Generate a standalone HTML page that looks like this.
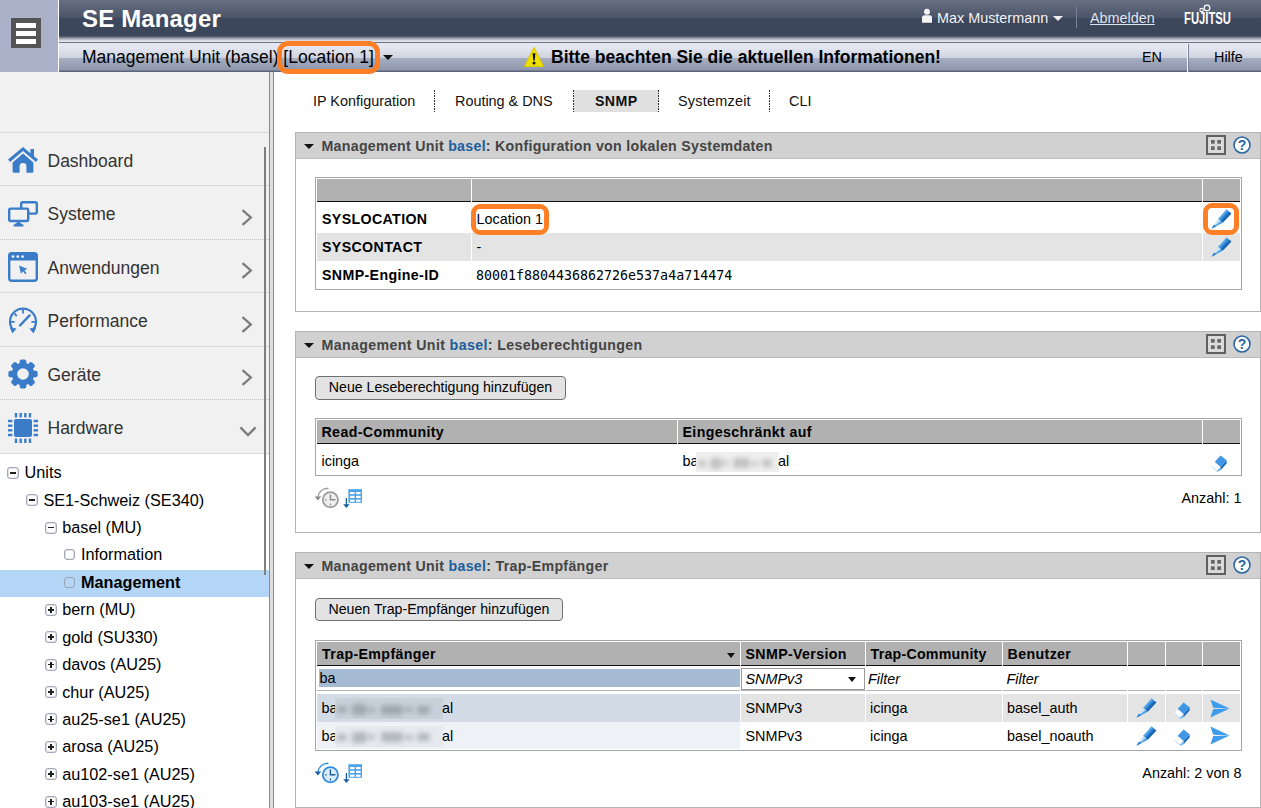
<!DOCTYPE html>
<html lang="de">
<head>
<meta charset="utf-8">
<title>SE Manager</title>
<style>
*{box-sizing:border-box;margin:0;padding:0}
html,body{width:1261px;height:808px;overflow:hidden;background:#fff}
body{font-family:"Liberation Sans",Arial,sans-serif;font-size:14px;color:#000;position:relative}
.a,svg{position:absolute}
#burger{left:0;top:0;width:58px;height:72px;background:#aab1c8}
#burger .ic{left:11px;top:18px;width:30px;height:30px;background:#555;position:absolute}
#burger .ic i{position:absolute;left:5px;width:20px;height:5px;background:#fff}
#top{left:59px;top:0;width:1202px;height:42px;background:linear-gradient(#676f83 0,#4a5367 18px,#3d475c 18.5px,#3d475c 36px,#8d93a1 38px,#e6e7ea 41px,#e6e7ea 42px)}
.usr{position:absolute;font-size:14.4px;line-height:17px;color:#f2f2f2;white-space:nowrap}
#top h1{position:absolute;left:23px;top:5px;font-size:24px;font-weight:bold;color:#fff;letter-spacing:.15px;line-height:28px}
#sub{left:59px;top:42px;width:1202px;height:30px;background:linear-gradient(#66728c 0,#66728c 1px,#e6e9f2 1.5px,#e2e5ef 6px,#cfd3df 16px,#a6aec1 16.5px,#8d96ac 28px,#5c657a 29px,#5c657a 30px)}
#sub .t{position:absolute;top:5px;font-size:17.5px;line-height:20px;white-space:nowrap}
#sub .s{position:absolute;top:7px;font-size:14.4px;line-height:17px;white-space:nowrap}
#side{left:0;top:72px;width:269px;height:736px;background:#f1f1f1}
#split{left:269px;top:72px;width:5px;height:736px;background:#dedede;border-left:1px solid #8a8a8a;border-right:1px solid #8a8a8a}
.tn{position:absolute;font-size:16.25px;line-height:20px;white-space:nowrap;color:#000}
.tb{position:absolute;width:12px;height:12px;border:1px solid #a4a8b6;border-radius:3px;background:#fff;box-shadow:inset 0 0 0 .6px #c8ccd6}
.tb:before{content:"";position:absolute;left:2px;top:4.2px;width:6px;height:1.6px;background:#222}
.tb.p:after{content:"";position:absolute;left:4.2px;top:2px;width:1.6px;height:6px;background:#222}
.tb.e:before{display:none}
.tb.e{width:11px;height:11px;margin:.5px 0 0 .5px}
.tb.s{background:transparent;border-color:#9aa6b8}
.dot{position:absolute;left:0;width:269px;height:0;border-top:1px dotted #c4c4c4}
svg.ico{left:8px}
svg.chev{left:241px}
.nl{position:absolute;left:47.5px;margin-top:1px;font-size:17.5px;line-height:20px;color:#333;white-space:nowrap}
.tab{position:absolute;top:90px;height:22px;padding-left:20px;font-size:14.4px;line-height:22px;white-space:nowrap;color:#111;background:repeating-linear-gradient(#2a2a2a 0,#2a2a2a 1.6px,transparent 1.6px,transparent 2.6px) right top/1.4px 100% no-repeat}
.tab.sel{background:repeating-linear-gradient(#2a2a2a 0,#2a2a2a 1.6px,transparent 1.6px,transparent 2.6px) right top/1.4px 100% no-repeat,#e0e0e0;font-weight:bold;font-size:14.2px;letter-spacing:.37px;padding-left:21px}
.panel{position:absolute;left:295px;width:966px;border:1px solid #b4b4b4;background:#fff}
.ph{position:absolute;left:296px;width:964px;height:26px;background:#d1d1d1;border-bottom:1px solid #bcbcbc}
.tt{position:absolute;left:321.5px;font-size:14.2px;letter-spacing:.28px;font-weight:bold;color:#444;line-height:17px;white-space:nowrap}
.tt b{color:#1b5e9b}
.arr{position:absolute;width:0;height:0;border:5px solid transparent;border-top:5px solid #111;border-bottom:0}
.tbl{position:absolute;left:315px;width:927px;border:1px solid #a6a6a6;background:#fff}
.th{position:absolute;background:#b1b1b1}
.hl{position:absolute;left:317px;width:923px;height:3px}
.c{position:absolute}
.bt{position:absolute;font-weight:bold;font-size:14.2px;letter-spacing:.37px;line-height:17px;white-space:nowrap;color:#000}
.rt{position:absolute;font-size:14.4px;line-height:17px;white-space:nowrap;color:#000}
.rt.it{font-style:italic}
.mono{font-family:"DejaVu Sans Mono","Liberation Mono",monospace;font-size:13.3px}
.btn{position:absolute;border:1px solid #707070;border-radius:4px;background:#e3e3e3;font-size:14.15px;line-height:21px;text-align:center;color:#000;white-space:nowrap}
.blurbox{position:absolute;overflow:hidden;box-shadow:0 0 2px 1px var(--b,transparent)}
.bl{position:absolute;left:0;top:0;right:0;bottom:0;filter:blur(2.5px)}
.bl i{position:absolute;background:currentColor;border-radius:3px}
.ob{position:absolute;border:5px solid #ff7f27;border-radius:9px}
</style>
</head>
<body>
<div id="burger" class="a"><div class="ic"><i style="top:4.5px"></i><i style="top:12.5px"></i><i style="top:20.5px"></i></div></div>
<div id="top" class="a"><h1>SE Manager</h1>
<svg style="left:862px;top:8px" width="12" height="16" viewBox="0 0 12 16"><circle cx="6" cy="3.8" r="3" fill="#f4f4f4"/><path d="M1 9.7a2.5 2.5 0 0 1 2.5-2.5h5a2.5 2.5 0 0 1 2.5 2.5V14.8H1z" fill="#f4f4f4"/></svg>
<div class="usr" style="left:878px;top:10px">Max Mustermann</div>
<div class="arr" style="left:994px;top:16px;border-top-color:#eee"></div>
<div class="a" style="left:1017px;top:7px;width:1px;height:21px;background:#79819a"></div>
<div class="usr" style="left:1031px;top:10px;text-decoration:underline;color:#dfe2ea">Abmelden</div>
<svg style="left:1122px;top:0" width="56" height="32" viewBox="0 0 56 32"><text x="3" y="24.4" font-family="Liberation Sans, sans-serif" font-weight="bold" font-size="16" fill="#fff" textLength="47" lengthAdjust="spacingAndGlyphs">FUJITSU</text><circle cx="20.6" cy="10" r="1.7" fill="none" stroke="#fff" stroke-width="1.1"/><circle cx="26" cy="8" r="2.8" fill="none" stroke="#fff" stroke-width="1.2"/></svg>
</div>
<div id="sub" class="a">
<div class="t" style="left:23px">Management Unit (basel) [Location 1]</div>
<div class="arr" style="left:324px;top:13px"></div>
<svg style="left:464px;top:4px" width="22" height="22" viewBox="0 0 22 22"><path d="M11 1.6 L20.4 20.4 H1.6 Z" fill="#efe000" stroke="#dccb00" stroke-width="1.2" stroke-linejoin="round"/><path d="M9.6 7.2h2.8l-.7 7.4h-1.4z" fill="#111"/><circle cx="11" cy="17.1" r="1.5" fill="#111"/></svg>
<div class="t" style="left:492px;font-weight:bold">Bitte beachten Sie die aktuellen Informationen!</div>
<div class="s" style="left:1083px">EN</div>
<div class="a" style="left:1128px;top:2px;width:1px;height:28px;background:#f4f5f9"></div>
<div class="a" style="left:1129px;top:2px;width:1px;height:28px;background:#7d859b"></div>
<div class="s" style="left:1155px">Hilfe</div>
</div>
<div class="a" style="left:58px;top:0;width:1px;height:72px;background:#fff"></div>
<div id="side" class="a"></div>
<div id="split" class="a"></div>
<div class="dot" style="top:132.2px"></div>
<svg class="ico" style="top:147px" width="30" height="26" viewBox="0 0 30 26"><path d="M15 0 L0 12.6 L2.1 15 L15 4.1 L27.9 15 L30 12.6 L26 9.2 V2 H22.4 V6.2 Z" fill="#3b7cc9"/><path d="M15 6.6 L4.6 15.4 V24.6 a1.2 1.2 0 0 0 1.2 1.2 H11.6 V19.4 a3.4 3.4 0 0 1 6.8 0 V25.8 H24.2 a1.2 1.2 0 0 0 1.2-1.2 V15.4 Z" fill="#3b7cc9"/></svg>
<div class="nl" style="top:149.7px">Dashboard</div>
<div class="dot" style="top:185.4px"></div>
<svg class="ico" style="top:201px" width="30" height="26" viewBox="0 0 30 26"><rect x="13.2" y="1.2" width="15.6" height="11.4" rx="1.5" fill="none" stroke="#3b7cc9" stroke-width="2.4"/><rect x="1.2" y="7.6" width="19" height="12.4" rx="1.5" fill="#f1f1f1" stroke="#3b7cc9" stroke-width="2.4"/><path d="M10.5 20.5 L15.5 24 V25.6 H5.5 V24 Z" fill="#3b7cc9"/></svg>
<div class="nl" style="top:202.9px">Systeme</div>
<svg class="chev" style="top:208.8px" width="12" height="17" viewBox="0 0 12 17"><path d="M1.5 1.2 L9.8 8.5 L1.5 15.8" fill="none" stroke="#7b7b7b" stroke-width="2.3"/></svg>
<div class="dot" style="top:239px"></div>
<svg class="ico" style="top:252px" width="30" height="30" viewBox="0 0 30 30"><rect x="1.2" y="1.2" width="27.6" height="27.6" rx="2.5" fill="none" stroke="#3b7cc9" stroke-width="2.4"/><path d="M1 3 a2 2 0 0 1 2-2 h24 a2 2 0 0 1 2 2 v5.6 H1z" fill="#3b7cc9"/><circle cx="5" cy="4.6" r="1.4" fill="#f1f1f1"/><circle cx="9.8" cy="4.6" r="1.4" fill="#f1f1f1"/><circle cx="14.6" cy="4.6" r="1.4" fill="#f1f1f1"/><path d="M11 13.5 L19.5 17 L16.3 18.2 L18.6 21.2 L17.2 22.2 L15 19.2 L13 21.8 Z" fill="#3b7cc9"/></svg>
<div class="nl" style="top:256.5px">Anwendungen</div>
<svg class="chev" style="top:262.4px" width="12" height="17" viewBox="0 0 12 17"><path d="M1.5 1.2 L9.8 8.5 L1.5 15.8" fill="none" stroke="#7b7b7b" stroke-width="2.3"/></svg>
<div class="dot" style="top:292.4px"></div>
<svg class="ico" style="top:307px" width="30" height="27" viewBox="0 0 30 27"><path d="M5.2 23.2 A13 13 0 1 1 24.8 23.2" fill="none" stroke="#3b7cc9" stroke-width="2.2"/><path d="M1.8 20.6 L8.6 21.6 L4.4 26.6 Z M28.2 20.6 L21.4 21.6 L25.6 26.6 Z" fill="#3b7cc9"/><path d="M12 18.5 L21.6 8.4" stroke="#3b7cc9" stroke-width="2.4" stroke-linecap="round"/><path d="M15 2.5 V6.4 M3 14.8 H6.6 M23.4 14.8 H27 M6.4 6.6 L8.8 9 " stroke="#3b7cc9" stroke-width="1.8"/></svg>
<div class="nl" style="top:309.9px">Performance</div>
<svg class="chev" style="top:315.8px" width="12" height="17" viewBox="0 0 12 17"><path d="M1.5 1.2 L9.8 8.5 L1.5 15.8" fill="none" stroke="#7b7b7b" stroke-width="2.3"/></svg>
<div class="dot" style="top:346px"></div>
<svg class="ico" style="top:359px" width="30" height="30" viewBox="-15 -15 30 30"><g fill="#3b7cc9"><circle r="11.2"/><rect x="-3.3" y="-14.6" width="6.6" height="7" rx="1.8" transform="rotate(0)"/><rect x="-3.3" y="-14.6" width="6.6" height="7" rx="1.8" transform="rotate(45)"/><rect x="-3.3" y="-14.6" width="6.6" height="7" rx="1.8" transform="rotate(90)"/><rect x="-3.3" y="-14.6" width="6.6" height="7" rx="1.8" transform="rotate(135)"/><rect x="-3.3" y="-14.6" width="6.6" height="7" rx="1.8" transform="rotate(180)"/><rect x="-3.3" y="-14.6" width="6.6" height="7" rx="1.8" transform="rotate(225)"/><rect x="-3.3" y="-14.6" width="6.6" height="7" rx="1.8" transform="rotate(270)"/><rect x="-3.3" y="-14.6" width="6.6" height="7" rx="1.8" transform="rotate(315)"/></g><circle r="5.8" fill="#f1f1f1"/></svg>
<div class="nl" style="top:363.5px">Geräte</div>
<svg class="chev" style="top:369.4px" width="12" height="17" viewBox="0 0 12 17"><path d="M1.5 1.2 L9.8 8.5 L1.5 15.8" fill="none" stroke="#7b7b7b" stroke-width="2.3"/></svg>
<div class="dot" style="top:399.3px"></div>
<svg class="ico" style="top:412.9px" width="30" height="30" viewBox="0 0 30 30"><rect x="6" y="6" width="18" height="18" rx="2" fill="#3b7cc9"/><g fill="#3b7cc9"><rect x="6.8" y="0" width="2.4" height="4.4"/><rect x="6.8" y="25.6" width="2.4" height="4.4"/><rect x="0" y="6.8" width="4.4" height="2.4"/><rect x="25.6" y="6.8" width="4.4" height="2.4"/><rect x="11.5" y="0" width="2.4" height="4.4"/><rect x="11.5" y="25.6" width="2.4" height="4.4"/><rect x="0" y="11.5" width="4.4" height="2.4"/><rect x="25.6" y="11.5" width="4.4" height="2.4"/><rect x="16.1" y="0" width="2.4" height="4.4"/><rect x="16.1" y="25.6" width="2.4" height="4.4"/><rect x="0" y="16.1" width="4.4" height="2.4"/><rect x="25.6" y="16.1" width="4.4" height="2.4"/><rect x="20.8" y="0" width="2.4" height="4.4"/><rect x="20.8" y="25.6" width="2.4" height="4.4"/><rect x="0" y="20.8" width="4.4" height="2.4"/><rect x="25.6" y="20.8" width="4.4" height="2.4"/></g></svg>
<div class="nl" style="top:416.8px">Hardware</div>
<svg class="chev" style="left:239px;top:425.6px" width="18" height="11" viewBox="0 0 18 11"><path d="M1.4 1.4 L9 9 L16.6 1.4" fill="none" stroke="#7b7b7b" stroke-width="2.3"/></svg>
<div class="a" style="left:264px;top:147px;width:2px;height:428px;background:#808080"></div>
<div class="a" style="left:0;top:453.5px;width:269px;height:355px;background:#fff"></div><div class="dot" style="top:452.6px"></div>
<div class="a" style="left:0;top:569.5px;width:269px;height:27.4px;background:#b3d6f7"></div>
<div class="a" style="left:264px;top:453px;width:2px;height:122px;background:#808080"></div>
<div class="tb" style="left:7.0px;top:466.8px"></div>
<div class="tn" style="left:24.6px;top:462.3px">Units</div>
<div class="tb" style="left:25.9px;top:494.2px"></div>
<div class="tn" style="left:43.4px;top:489.7px">SE1-Schweiz (SE340)</div>
<div class="tb" style="left:44.8px;top:521.6px"></div>
<div class="tn" style="left:62.2px;top:517.1px">basel (MU)</div>
<div class="tb e" style="left:63.7px;top:548.4px"></div>
<div class="tn" style="left:81.0px;top:543.9px">Information</div>
<div class="tb e s" style="left:63.7px;top:576.8px"></div>
<div class="tn" style="left:81.0px;top:572.3px;font-weight:bold">Management</div>
<div class="tb p" style="left:44.8px;top:603.8px"></div>
<div class="tn" style="left:62.2px;top:599.3px">bern (MU)</div>
<div class="tb p" style="left:44.8px;top:631.2px"></div>
<div class="tn" style="left:62.2px;top:626.7px">gold (SU330)</div>
<div class="tb p" style="left:44.8px;top:658.6px"></div>
<div class="tn" style="left:62.2px;top:654.1px">davos (AU25)</div>
<div class="tb p" style="left:44.8px;top:686.0px"></div>
<div class="tn" style="left:62.2px;top:681.5px">chur (AU25)</div>
<div class="tb p" style="left:44.8px;top:713.4px"></div>
<div class="tn" style="left:62.2px;top:708.9px">au25-se1 (AU25)</div>
<div class="tb p" style="left:44.8px;top:740.8px"></div>
<div class="tn" style="left:62.2px;top:736.3px">arosa (AU25)</div>
<div class="tb p" style="left:44.8px;top:768.2px"></div>
<div class="tn" style="left:62.2px;top:763.7px">au102-se1 (AU25)</div>
<div class="tb p" style="left:44.8px;top:795.6px"></div>
<div class="tn" style="left:62.2px;top:791.1px">au103-se1 (AU25)</div>
<div class="tab" style="left:293px;width:142px">IP Konfiguration</div>
<div class="tab" style="left:435px;width:139px">Routing &amp; DNS</div>
<div class="tab sel" style="left:574px;width:85px">SNMP</div>
<div class="tab" style="left:659px;width:111px;padding-left:19px;letter-spacing:.25px">Systemzeit</div>
<div class="tab" style="left:770px;width:60px;padding-left:19px;background:none">CLI</div>
<div class="panel" style="top:132px;height:180px"></div><div class="ph" style="top:133px"></div>
<div class="arr" style="left:304px;top:144px"></div><div class="tt" style="top:137.5px;letter-spacing:0.28px">Management Unit <b>basel</b>: Konfiguration von lokalen Systemdaten</div>
<svg style="left:1206px;top:135px" width="20" height="20" viewBox="0 0 20 20"><rect x="1" y="1" width="18" height="18" fill="#d9d9d9" stroke="#606060" stroke-width="2"/><g fill="#666"><rect x="5" y="5" width="3.7" height="3.7"/><rect x="11.3" y="5" width="3.7" height="3.7"/><rect x="5" y="11.3" width="3.7" height="3.7"/><rect x="11.3" y="11.3" width="3.7" height="3.7"/></g></svg>
<svg style="left:1233px;top:136px" width="18" height="18" viewBox="0 0 18 18"><circle cx="9" cy="9" r="8" fill="#fff" stroke="#2b66a3" stroke-width="1.6"/><text x="9" y="14" text-anchor="middle" font-family="Liberation Sans, sans-serif" font-weight="bold" font-size="14" fill="#2b66a3">?</text></svg>
<div class="tbl" style="top:177px;height:113px"></div>
<div class="c" style="left:317px;top:179px;width:154px;height:22px;background:#b1b1b1"></div>
<div class="c" style="left:472px;top:179px;width:730px;height:22px;background:#b1b1b1"></div>
<div class="c" style="left:1203px;top:179px;width:37px;height:22px;background:#b1b1b1"></div>
<div class="hl" style="left:317px;width:154px;top:200px;background:linear-gradient(#b1b1b1 0,#b1b1b1 .6px,#111 .8px,#111 2.1px,#fff 2.3px)"></div>
<div class="hl" style="left:472px;width:730px;top:200px;background:linear-gradient(#b1b1b1 0,#b1b1b1 .6px,#111 .8px,#111 2.1px,#fff 2.3px)"></div>
<div class="hl" style="left:1203px;width:37px;top:200px;background:linear-gradient(#b1b1b1 0,#b1b1b1 .6px,#111 .8px,#111 2.1px,#fff 2.3px)"></div>
<div class="c" style="left:317px;top:233px;width:154px;height:27.6px;background:#e4e4e4"></div>
<div class="c" style="left:472px;top:233px;width:730px;height:27.6px;background:#e4e4e4"></div>
<div class="c" style="left:1203px;top:233px;width:37px;height:27.6px;background:#e4e4e4"></div>
<div class="bt" style="left:322px;top:211px">SYSLOCATION</div><div class="bt" style="left:322px;top:239px">SYSCONTACT</div><div class="bt" style="left:322px;top:267px">SNMP-Engine-ID</div>
<div class="rt" style="left:476.5px;top:211px">Location 1</div><div class="rt" style="left:476.5px;top:239px">-</div><div class="rt mono" style="left:476px;top:267px">80001f8804436862726e537a4a714474</div>
<svg style="left:1210.5px;top:208.7px" width="21" height="20" viewBox="0 0 21 20"><path d="M15.6 0.5 L20.3 4.6 L11.6 13.8 L7.2 10 Z" fill="#2a80d2"/><path d="M15.6 0.5 L17 1.7 L8.6 11.2 L7.2 10 Z" fill="#58a8ec"/><path d="M18.6 3.1 L20.3 4.6 L11.6 13.8 L10 12.4 Z" fill="#1b64b0"/><path d="M7.2 10 L11.6 13.8 L0.4 19.8 Z" fill="#c6e3fa"/><path d="M9.6 12 L11.6 13.8 L0.4 19.8 Z" fill="#4f9fe3"/><path d="M3 15.4 L5.2 17.2 L0.4 19.8 Z" fill="#2a80d2"/></svg>
<svg style="left:1210.5px;top:236.7px" width="21" height="20" viewBox="0 0 21 20"><path d="M15.6 0.5 L20.3 4.6 L11.6 13.8 L7.2 10 Z" fill="#2a80d2"/><path d="M15.6 0.5 L17 1.7 L8.6 11.2 L7.2 10 Z" fill="#58a8ec"/><path d="M18.6 3.1 L20.3 4.6 L11.6 13.8 L10 12.4 Z" fill="#1b64b0"/><path d="M7.2 10 L11.6 13.8 L0.4 19.8 Z" fill="#c6e3fa"/><path d="M9.6 12 L11.6 13.8 L0.4 19.8 Z" fill="#4f9fe3"/><path d="M3 15.4 L5.2 17.2 L0.4 19.8 Z" fill="#2a80d2"/></svg>
<div class="panel" style="top:331px;height:202px"></div><div class="ph" style="top:332px"></div>
<div class="arr" style="left:304px;top:343px"></div><div class="tt" style="top:336.5px;letter-spacing:0.37px">Management Unit <b>basel</b>: Leseberechtigungen</div>
<svg style="left:1206px;top:334px" width="20" height="20" viewBox="0 0 20 20"><rect x="1" y="1" width="18" height="18" fill="#d9d9d9" stroke="#606060" stroke-width="2"/><g fill="#666"><rect x="5" y="5" width="3.7" height="3.7"/><rect x="11.3" y="5" width="3.7" height="3.7"/><rect x="5" y="11.3" width="3.7" height="3.7"/><rect x="11.3" y="11.3" width="3.7" height="3.7"/></g></svg>
<svg style="left:1233px;top:335px" width="18" height="18" viewBox="0 0 18 18"><circle cx="9" cy="9" r="8" fill="#fff" stroke="#2b66a3" stroke-width="1.6"/><text x="9" y="14" text-anchor="middle" font-family="Liberation Sans, sans-serif" font-weight="bold" font-size="14" fill="#2b66a3">?</text></svg>
<div class="btn" style="left:315px;top:376px;width:251px;height:24px">Neue Leseberechtigung hinzufügen</div>
<div class="tbl" style="top:418px;height:58px"></div>
<div class="c" style="left:317px;top:420px;width:360px;height:23px;background:#b1b1b1"></div>
<div class="c" style="left:678px;top:420px;width:524px;height:23px;background:#b1b1b1"></div>
<div class="c" style="left:1203px;top:420px;width:37px;height:23px;background:#b1b1b1"></div>
<div class="hl" style="left:317px;width:360px;top:442px;background:linear-gradient(#b1b1b1 0,#b1b1b1 .6px,#111 .8px,#111 2.1px,#fff 2.3px)"></div>
<div class="hl" style="left:678px;width:524px;top:442px;background:linear-gradient(#b1b1b1 0,#b1b1b1 .6px,#111 .8px,#111 2.1px,#fff 2.3px)"></div>
<div class="hl" style="left:1203px;width:37px;top:442px;background:linear-gradient(#b1b1b1 0,#b1b1b1 .6px,#111 .8px,#111 2.1px,#fff 2.3px)"></div>
<div class="bt" style="left:321.5px;top:424px">Read-Community</div><div class="bt" style="left:682.5px;top:424px">Eingeschränkt auf</div>
<div class="rt" style="left:321.5px;top:453px">icinga</div><div class="rt" style="left:682.5px;top:453px">ba</div>
<div class="blurbox" style="left:696px;top:452px;width:83px;height:20px;background:#efefef"><div class="bl" style="color:#c2c2c2"><i style="left:1.6px;top:7.5px;width:8.0px;height:7px"></i><i style="left:13.6px;top:5.5px;width:12.0px;height:11px"></i><i style="left:27.2px;top:8.0px;width:4.8px;height:6px"></i><i style="left:36.8px;top:6.0px;width:17.6px;height:10px"></i><i style="left:56.0px;top:8.5px;width:6.4px;height:5px"></i><i style="left:65.6px;top:7.0px;width:10.4px;height:8px"></i></div></div>
<div class="rt" style="left:778px;top:453px">al</div>
<svg style="left:1211px;top:454.5px" width="17" height="18" viewBox="0 0 17 18"><path d="M9.6 0.6 L15.6 5.2 L9.4 12 L3.6 7 Z" fill="#3f97e6"/><path d="M15.6 5.2 V8.6 L9.4 15.4 V12 Z" fill="#1f6fc0"/><path d="M3.6 7 L9.4 12 L6 15.4 L0.6 10.4 Z" fill="#fdfdfd"/><path d="M9.4 12 V15.4 L6 17 L6 15.4 Z" fill="#7dbdf2"/><path d="M0.6 10.4 L6 15.4 V17 L0.6 12 Z" fill="#cfe5f8"/></svg>
<svg style="left:314px;top:487.3px" width="26" height="22" viewBox="0 0 26 22"><circle cx="16.4" cy="12.8" r="7.6" fill="#efefef" stroke="#9c9c9c" stroke-width="1.8"/><path d="M16.4 7.6 V12.8 H21.4" fill="none" stroke="#8a8a8a" stroke-width="1.4"/><path d="M16.4 16.6 v2 M11 12.8 h1.6" stroke="#8a8a8a" stroke-width="1.2"/><path d="M14.4 1.2 C8.4 1.4 4.6 5 4 10" fill="none" stroke="#9c9c9c" stroke-width="1.4"/><path d="M0.6 9.6 H7.2 L3.9 13.4 Z" fill="#8a8a8a"/></svg>
<svg style="left:342px;top:488px" width="22" height="22" viewBox="0 0 22 22"><rect x="6.4" y="1.2" width="13.6" height="13.6" fill="#4aa3ea"/><g fill="#fff"><rect x="8" y="4" width="4.6" height="2.2"/><rect x="14" y="4" width="4.6" height="2.2"/><rect x="8" y="7.8" width="4.6" height="2.2"/><rect x="14" y="7.8" width="4.6" height="2.2"/><rect x="8" y="11.6" width="4.6" height="2.2"/><rect x="14" y="11.6" width="4.6" height="2.2"/></g><path d="M4.4 10 V17" stroke="#1a5fa0" stroke-width="1.3"/><path d="M1.2 16.2 H7.6 L4.4 20 Z" fill="#1a5fa0"/></svg>
<div class="rt" style="right:19.5px;top:489.5px">Anzahl: 1</div>
<div class="panel" style="top:552px;height:256px"></div><div class="ph" style="top:553px"></div>
<div class="arr" style="left:304px;top:564px"></div><div class="tt" style="top:557.5px;letter-spacing:0.3px">Management Unit <b>basel</b>: Trap-Empfänger</div>
<svg style="left:1206px;top:555px" width="20" height="20" viewBox="0 0 20 20"><rect x="1" y="1" width="18" height="18" fill="#d9d9d9" stroke="#606060" stroke-width="2"/><g fill="#666"><rect x="5" y="5" width="3.7" height="3.7"/><rect x="11.3" y="5" width="3.7" height="3.7"/><rect x="5" y="11.3" width="3.7" height="3.7"/><rect x="11.3" y="11.3" width="3.7" height="3.7"/></g></svg>
<svg style="left:1233px;top:556px" width="18" height="18" viewBox="0 0 18 18"><circle cx="9" cy="9" r="8" fill="#fff" stroke="#2b66a3" stroke-width="1.6"/><text x="9" y="14" text-anchor="middle" font-family="Liberation Sans, sans-serif" font-weight="bold" font-size="14" fill="#2b66a3">?</text></svg>
<div class="btn" style="left:315px;top:598px;width:248px;height:23px;line-height:20px">Neuen Trap-Empfänger hinzufügen</div>
<div class="tbl" style="top:640px;height:111px"></div>
<div class="c" style="left:317px;top:642px;width:423px;height:23px;background:#b1b1b1"></div>
<div class="c" style="left:741px;top:642px;width:124px;height:23px;background:#b1b1b1"></div>
<div class="c" style="left:866px;top:642px;width:136px;height:23px;background:#b1b1b1"></div>
<div class="c" style="left:1003px;top:642px;width:124px;height:23px;background:#b1b1b1"></div>
<div class="c" style="left:1128px;top:642px;width:37px;height:23px;background:#b1b1b1"></div>
<div class="c" style="left:1166px;top:642px;width:36px;height:23px;background:#b1b1b1"></div>
<div class="c" style="left:1203px;top:642px;width:37px;height:23px;background:#b1b1b1"></div>
<div class="hl" style="left:317px;width:423px;top:664px;background:linear-gradient(#b1b1b1 0,#b1b1b1 .6px,#111 .8px,#111 2.1px,#fff 2.3px)"></div>
<div class="hl" style="left:741px;width:124px;top:664px;background:linear-gradient(#b1b1b1 0,#b1b1b1 .6px,#111 .8px,#111 2.1px,#fff 2.3px)"></div>
<div class="hl" style="left:866px;width:136px;top:664px;background:linear-gradient(#b1b1b1 0,#b1b1b1 .6px,#111 .8px,#111 2.1px,#fff 2.3px)"></div>
<div class="hl" style="left:1003px;width:124px;top:664px;background:linear-gradient(#b1b1b1 0,#b1b1b1 .6px,#111 .8px,#111 2.1px,#fff 2.3px)"></div>
<div class="hl" style="left:1128px;width:37px;top:664px;background:linear-gradient(#b1b1b1 0,#b1b1b1 .6px,#111 .8px,#111 2.1px,#fff 2.3px)"></div>
<div class="hl" style="left:1166px;width:36px;top:664px;background:linear-gradient(#b1b1b1 0,#b1b1b1 .6px,#111 .8px,#111 2.1px,#fff 2.3px)"></div>
<div class="hl" style="left:1203px;width:37px;top:664px;background:linear-gradient(#b1b1b1 0,#b1b1b1 .6px,#111 .8px,#111 2.1px,#fff 2.3px)"></div>
<div class="bt" style="left:322px;top:646px">Trap-Empfänger</div><div class="bt" style="left:745.5px;top:646px">SNMP-Version</div><div class="bt" style="left:870.5px;top:646px;letter-spacing:.25px">Trap-Community</div><div class="bt" style="left:1007.6px;top:646px">Benutzer</div>
<div class="arr" style="left:727px;top:653px;border-width:4.5px;border-top-width:5px"></div>
<div class="a" style="left:318.5px;top:669px;width:421px;height:18px;background:#a5bbd3"></div><div class="rt" style="left:319.5px;top:670px">ba</div>
<div class="a" style="left:741px;top:668px;width:124px;height:22px;border:1px solid #9a9a9a;background:#fff"></div><div class="rt it" style="left:745.5px;top:671px">SNMPv3</div>
<div class="arr" style="left:848px;top:677px;border-width:4.5px;border-top-width:5px"></div>
<div class="rt it" style="left:868px;top:671px">Filter</div><div class="rt it" style="left:1006.5px;top:671px">Filter</div>
<div class="c" style="left:317px;top:690px;width:423px;height:1px;background:#b5b5b5"></div>
<div class="c" style="left:741px;top:690px;width:124px;height:1px;background:#b5b5b5"></div>
<div class="c" style="left:866px;top:690px;width:136px;height:1px;background:#b5b5b5"></div>
<div class="c" style="left:1003px;top:690px;width:124px;height:1px;background:#b5b5b5"></div>
<div class="c" style="left:1128px;top:690px;width:37px;height:1px;background:#b5b5b5"></div>
<div class="c" style="left:1166px;top:690px;width:36px;height:1px;background:#b5b5b5"></div>
<div class="c" style="left:1203px;top:690px;width:37px;height:1px;background:#b5b5b5"></div>
<div class="c" style="left:317px;top:694px;width:423px;height:27.7px;background:#d3dce6"></div>
<div class="c" style="left:741px;top:694px;width:124px;height:27.7px;background:#e4e4e4"></div>
<div class="c" style="left:866px;top:694px;width:136px;height:27.7px;background:#e4e4e4"></div>
<div class="c" style="left:1003px;top:694px;width:124px;height:27.7px;background:#e4e4e4"></div>
<div class="c" style="left:1128px;top:694px;width:37px;height:27.7px;background:#e4e4e4"></div>
<div class="c" style="left:1166px;top:694px;width:36px;height:27.7px;background:#e4e4e4"></div>
<div class="c" style="left:1203px;top:694px;width:37px;height:27.7px;background:#e4e4e4"></div>
<div class="c" style="left:317px;top:721.7px;width:423px;height:27.6px;background:#eef2f6"></div>
<div class="rt" style="left:321.5px;top:700px">ba</div>
<div class="blurbox" style="left:335px;top:698px;width:108px;height:21px;background:#c8d0d9"><div class="bl" style="color:#9fa7b1"><i style="left:2.0px;top:8.0px;width:10.0px;height:7px"></i><i style="left:17.0px;top:6.0px;width:15.0px;height:11px"></i><i style="left:34.0px;top:8.5px;width:6.0px;height:6px"></i><i style="left:46.0px;top:6.5px;width:22.0px;height:10px"></i><i style="left:70.0px;top:9.0px;width:8.0px;height:5px"></i><i style="left:82.0px;top:7.5px;width:13.0px;height:8px"></i></div></div>
<div class="rt" style="left:442px;top:700px">al</div>
<div class="rt" style="left:745.5px;top:700px">SNMPv3</div><div class="rt" style="left:870px;top:700px">icinga</div><div class="rt" style="left:1007px;top:700px">basel_auth</div>
<svg style="left:1135.5px;top:698.3px" width="21" height="20" viewBox="0 0 21 20"><path d="M15.6 0.5 L20.3 4.6 L11.6 13.8 L7.2 10 Z" fill="#2a80d2"/><path d="M15.6 0.5 L17 1.7 L8.6 11.2 L7.2 10 Z" fill="#58a8ec"/><path d="M18.6 3.1 L20.3 4.6 L11.6 13.8 L10 12.4 Z" fill="#1b64b0"/><path d="M7.2 10 L11.6 13.8 L0.4 19.8 Z" fill="#c6e3fa"/><path d="M9.6 12 L11.6 13.8 L0.4 19.8 Z" fill="#4f9fe3"/><path d="M3 15.4 L5.2 17.2 L0.4 19.8 Z" fill="#2a80d2"/></svg>
<svg style="left:1174px;top:701.5px" width="17" height="18" viewBox="0 0 17 18"><path d="M9.6 0.6 L15.6 5.2 L9.4 12 L3.6 7 Z" fill="#3f97e6"/><path d="M15.6 5.2 V8.6 L9.4 15.4 V12 Z" fill="#1f6fc0"/><path d="M3.6 7 L9.4 12 L6 15.4 L0.6 10.4 Z" fill="#fdfdfd"/><path d="M9.4 12 V15.4 L6 17 L6 15.4 Z" fill="#7dbdf2"/><path d="M0.6 10.4 L6 15.4 V17 L0.6 12 Z" fill="#cfe5f8"/></svg>
<svg style="left:1210px;top:698.5px" width="20" height="19" viewBox="0 0 20 19"><path d="M0.4 0.4 L19.6 9.4 L3.2 8.7 Z" fill="#3f9cea"/><path d="M3.2 10.1 L19.6 9.4 L0.4 18.4 Z" fill="#3f9cea"/></svg>
<div class="rt" style="left:321.5px;top:727.5px">ba</div>
<div class="blurbox" style="left:335px;top:725.5px;width:108px;height:21px;background:#e6eaee"><div class="bl" style="color:#b2b8be"><i style="left:2.0px;top:8.0px;width:10.0px;height:7px"></i><i style="left:17.0px;top:6.0px;width:15.0px;height:11px"></i><i style="left:34.0px;top:8.5px;width:6.0px;height:6px"></i><i style="left:46.0px;top:6.5px;width:22.0px;height:10px"></i><i style="left:70.0px;top:9.0px;width:8.0px;height:5px"></i><i style="left:82.0px;top:7.5px;width:13.0px;height:8px"></i></div></div>
<div class="rt" style="left:442px;top:727.5px">al</div>
<div class="rt" style="left:745.5px;top:727.5px">SNMPv3</div><div class="rt" style="left:870px;top:727.5px">icinga</div><div class="rt" style="left:1007px;top:727.5px">basel_noauth</div>
<svg style="left:1135.5px;top:725.8px" width="21" height="20" viewBox="0 0 21 20"><path d="M15.6 0.5 L20.3 4.6 L11.6 13.8 L7.2 10 Z" fill="#2a80d2"/><path d="M15.6 0.5 L17 1.7 L8.6 11.2 L7.2 10 Z" fill="#58a8ec"/><path d="M18.6 3.1 L20.3 4.6 L11.6 13.8 L10 12.4 Z" fill="#1b64b0"/><path d="M7.2 10 L11.6 13.8 L0.4 19.8 Z" fill="#c6e3fa"/><path d="M9.6 12 L11.6 13.8 L0.4 19.8 Z" fill="#4f9fe3"/><path d="M3 15.4 L5.2 17.2 L0.4 19.8 Z" fill="#2a80d2"/></svg>
<svg style="left:1174px;top:729.0px" width="17" height="18" viewBox="0 0 17 18"><path d="M9.6 0.6 L15.6 5.2 L9.4 12 L3.6 7 Z" fill="#3f97e6"/><path d="M15.6 5.2 V8.6 L9.4 15.4 V12 Z" fill="#1f6fc0"/><path d="M3.6 7 L9.4 12 L6 15.4 L0.6 10.4 Z" fill="#fdfdfd"/><path d="M9.4 12 V15.4 L6 17 L6 15.4 Z" fill="#7dbdf2"/><path d="M0.6 10.4 L6 15.4 V17 L0.6 12 Z" fill="#cfe5f8"/></svg>
<svg style="left:1210px;top:726.0px" width="20" height="19" viewBox="0 0 20 19"><path d="M0.4 0.4 L19.6 9.4 L3.2 8.7 Z" fill="#3f9cea"/><path d="M3.2 10.1 L19.6 9.4 L0.4 18.4 Z" fill="#3f9cea"/></svg>
<svg style="left:314px;top:762.3px" width="26" height="22" viewBox="0 0 26 22"><circle cx="16.4" cy="12.8" r="7.6" fill="#dcecfb" stroke="#2f8be0" stroke-width="1.8"/><path d="M16.4 7.6 V12.8 H21.4" fill="none" stroke="#1a5fa0" stroke-width="1.4"/><path d="M16.4 16.6 v2 M11 12.8 h1.6" stroke="#1a5fa0" stroke-width="1.2"/><path d="M14.4 1.2 C8.4 1.4 4.6 5 4 10" fill="none" stroke="#2f8be0" stroke-width="1.4"/><path d="M0.6 9.6 H7.2 L3.9 13.4 Z" fill="#1a5fa0"/></svg>
<svg style="left:342px;top:763px" width="22" height="22" viewBox="0 0 22 22"><rect x="6.4" y="1.2" width="13.6" height="13.6" fill="#4aa3ea"/><g fill="#fff"><rect x="8" y="4" width="4.6" height="2.2"/><rect x="14" y="4" width="4.6" height="2.2"/><rect x="8" y="7.8" width="4.6" height="2.2"/><rect x="14" y="7.8" width="4.6" height="2.2"/><rect x="8" y="11.6" width="4.6" height="2.2"/><rect x="14" y="11.6" width="4.6" height="2.2"/></g><path d="M4.4 10 V17" stroke="#1a5fa0" stroke-width="1.3"/><path d="M1.2 16.2 H7.6 L4.4 20 Z" fill="#1a5fa0"/></svg>
<div class="rt" style="right:19.5px;top:765px">Anzahl: 2 von 8</div>
<div class="ob" style="left:277px;top:41px;width:103.4px;height:33px;border-radius:11px"></div>
<div class="ob" style="left:471px;top:204px;width:78px;height:31px"></div>
<div class="ob" style="left:1203px;top:203px;width:36px;height:32px"></div>
</body>
</html>
